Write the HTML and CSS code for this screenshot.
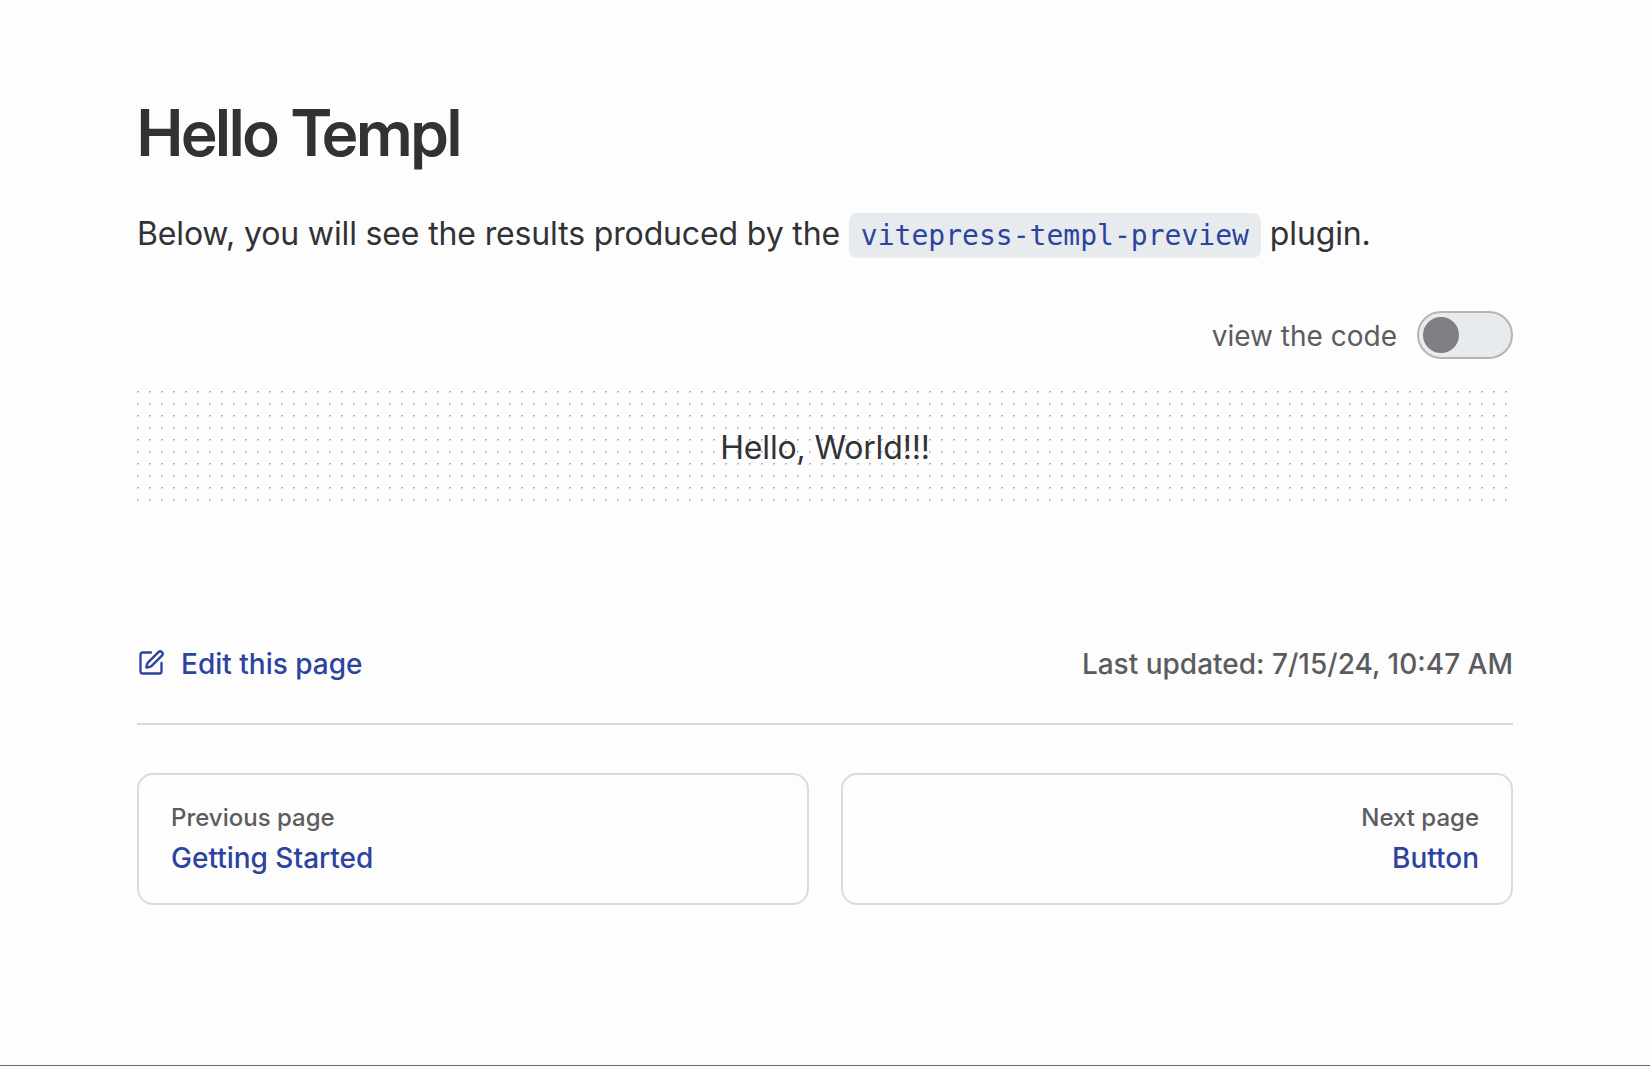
FILE: index.html
```html
<!DOCTYPE html>
<html lang="en">
<head>
<meta charset="utf-8">
<title>Hello Templ</title>
<link rel="stylesheet" href="styles.css">
</head>
<body>
<div class="page">
  <main class="doc">
    <h1 class="title">Hello Templ</h1>
    <p class="intro">Below, you will see the results produced by the <code class="code">vitepress-templ-preview</code> plugin.</p>
    <section class="preview">
      <div class="preview-bar">
        <span class="preview-label">view the code</span>
        <button class="switch" type="button" role="switch" aria-checked="false" aria-label="view the code"><span class="switch-knob"></span></button>
      </div>
      <div class="preview-stage">Hello, World!!!</div>
    </section>
  </main>
  <footer class="footer">
    <div class="edit-row">
      <a class="edit-link"><svg class="edit-icon" viewBox="0 0 24 24" fill="none" stroke="currentColor" stroke-width="2" stroke-linecap="round" stroke-linejoin="round"><path d="M12 3H5a2 2 0 0 0-2 2v14a2 2 0 0 0 2 2h14a2 2 0 0 0 2-2v-7"/><path d="M18.375 2.625a1 1 0 0 1 3 3l-9.013 9.014a2 2 0 0 1-.853.505l-2.873.84a.5.5 0 0 1-.62-.62l.84-2.873a2 2 0 0 1 .506-.852z"/></svg><span class="edit-text">Edit this page</span></a>
      <p class="updated">Last updated: 7/15/24, 10:47 AM</p>
    </div>
    <nav class="pager">
      <a class="pager-link"><span class="pager-desc">Previous page</span><span class="pager-title">Getting Started</span></a>
      <a class="pager-link pager-next"><span class="pager-desc">Next page</span><span class="pager-title">Button</span></a>
    </nav>
  </footer>
</div>
</body>
</html>
```
FILE: styles.css
```css
* { box-sizing: border-box; }
body {
  margin: 0;
  background: #fdfdfd;
  color: #323235;
  font-family: Inter, sans-serif;
  font-size: 32px;
  line-height: 56px;
}
h1, p { margin: 0; }
.page {
  height: 1066px;
  padding: 93px 137px 0;
  border-bottom: 1px solid #6c6a6c;
}
.title {
  font-family: "Inter Display", Inter, sans-serif;
  font-size: 64px;
  line-height: 80px;
  font-weight: 600;
  letter-spacing: -0.02em;
}
.intro { margin-top: 33px; letter-spacing: -0.145px; }
.code {
  padding: 6px 12px;
  border-radius: 8px;
  background: #e8ebee;
  color: #2c449f;
  font-family: "DejaVu Sans Mono", monospace;
  font-size: 28px;
  letter-spacing: 0.02px;
}
.preview { margin-top: 47px; }
.preview-bar {
  display: flex;
  justify-content: flex-end;
  align-items: center;
  gap: 20px;
  height: 48px;
}
.preview-label { padding-top: 2px; font-size: 28px; color: #5c5c5f; line-height: 48px; }
.switch {
  display: flex;
  align-items: center;
  width: 96px;
  height: 48px;
  padding: 0 4px;
  border: 2px solid #b5b5b7;
  border-radius: 24px;
  background: #e8ebee;
}
.switch-knob {
  width: 36px;
  height: 36px;
  border-radius: 50%;
  background: #807e83;
}
.preview-stage {
  margin-top: 32px;
  padding: 29px 0 27px;
  text-align: center;
  letter-spacing: -0.16px;
  background:
    conic-gradient(from 0deg at 2px 1px, transparent 75%, #b4b4b4 0) 0 0 / 12px 12px,
    conic-gradient(from 0deg at 1px 2px, transparent 75%, #b4b4b4 0) 0 0 / 12px 12px;
}
.footer { margin-top: 128px; }
.edit-row {
  display: flex;
  justify-content: space-between;
  align-items: center;
  height: 94px;
  padding-bottom: 28px;
  border-bottom: 2px solid #dadada;
  font-size: 28px;
  line-height: 64px;
  font-weight: 500;
}
.edit-link { display: flex; align-items: center; gap: 16px; color: #2c449f; }
.edit-icon { width: 28px; height: 28px; }
.edit-text, .updated { padding-top: 2px; }
.updated { color: #5c5c5f; }
.pager {
  display: grid;
  grid-template-columns: 1fr 1fr;
  gap: 32px;
  padding-top: 48px;
}
.pager-link {
  display: flex;
  flex-direction: column;
  height: 132px;
  padding: 23px 32px 21px;
  border: 2px solid #dadada;
  border-radius: 16px;
  font-weight: 500;
}
.pager-next { align-items: flex-end; }
.pager-desc { font-size: 24px; line-height: 40px; color: #5c5c5f; }
.pager-title { font-size: 28px; line-height: 40px; color: #2c449f; }
```
